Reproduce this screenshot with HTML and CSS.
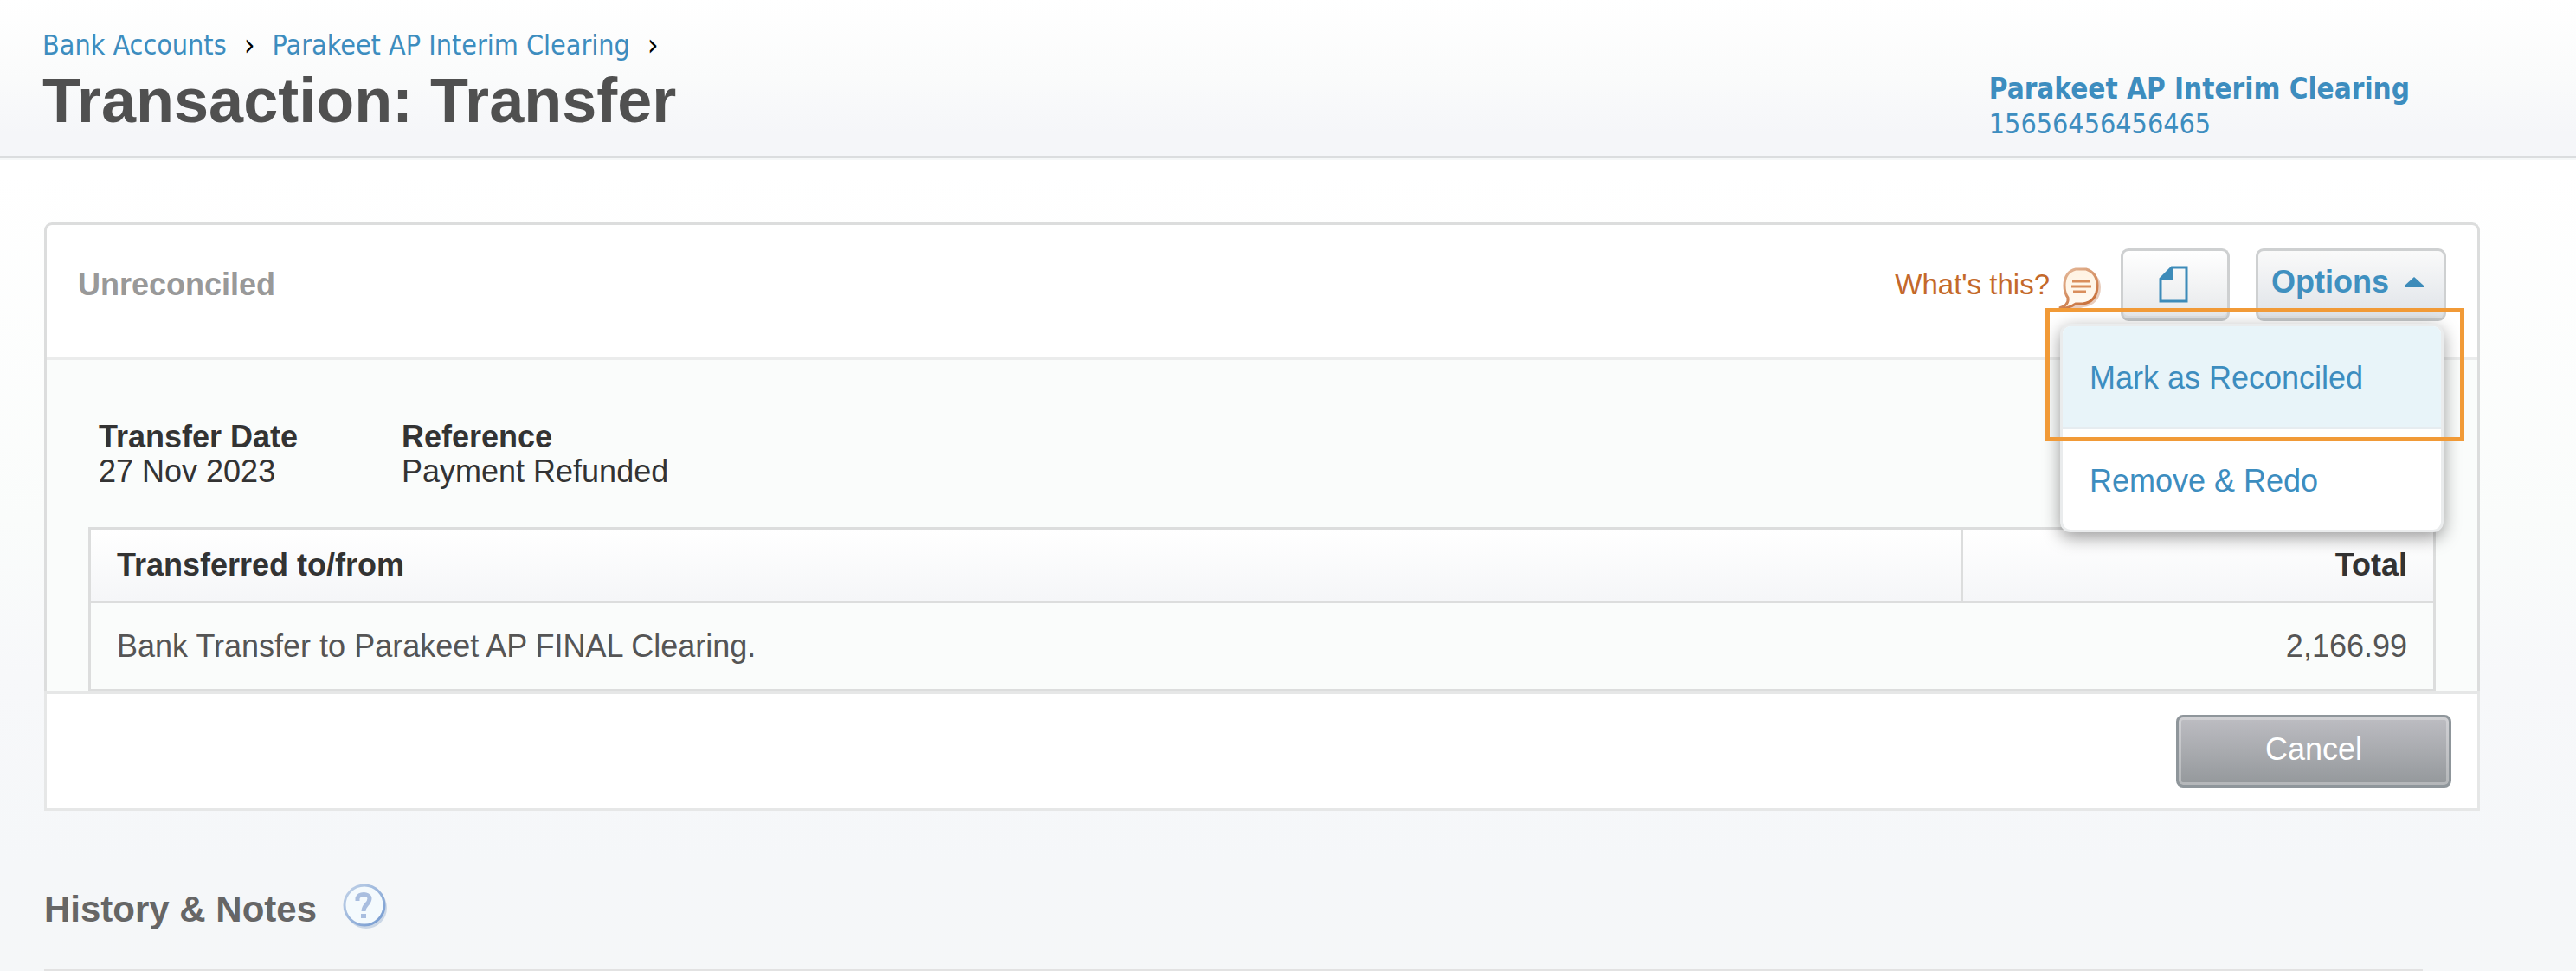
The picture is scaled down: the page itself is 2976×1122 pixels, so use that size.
FILE: index.html
```html
<!DOCTYPE html>
<html lang="en">
<head>
  <meta charset="UTF-8">
  <title>Transaction: Transfer</title>
  <link rel="stylesheet" href="styles.css">
</head>

<body>
<header class="page-header">
  <div class="heading">
    <nav class="breadcrumb">
      <a href="#">Bank Accounts</a>
      <span class="sep">›</span>
      <a href="#">Parakeet AP Interim Clearing</a>
      <span class="sep">›</span>
    </nav>
    <h1>Transaction: Transfer</h1>
  </div>
  <a class="account" href="#">
    <strong>Parakeet AP Interim Clearing</strong>
    <span>15656456456465</span>
  </a>
</header>

<main class="content">
  <section class="card">
    <div class="card-header">
      <h2 class="status">Unreconciled</h2>
      <div class="actions">
        <a class="whats-this" href="#">
          What's this?
          <svg class="icon-bubble" viewBox="0 0 50 56" width="50" height="56">
            <defs>
              <linearGradient id="bubble" x1="0" y1="0" x2="0" y2="1">
                <stop offset="0" stop-color="#fff3e2"/>
                <stop offset="1" stop-color="#fffaf3"/>
              </linearGradient>
              <linearGradient id="bubble-line" x1="0" y1="0" x2="0.6" y2="1">
                <stop offset="0" stop-color="#e6bda0"/>
                <stop offset="1" stop-color="#c8703a"/>
              </linearGradient>
            </defs>
            <path d="M28 5H33C43 7 49 14 49 24C49 37 41 46 29 47C20 50 10 52 3 50L12 42Z" fill="#e9cdbd"/>
            <path d="M20 3H32C41 6 45 12 45 22C45 35 38 42 28 43H20C14 47 9 49 1 48C8 46 12 42 11 36C8 32 7 28 7 22C7 11 12 5 20 3Z" fill="url(#bubble)" stroke="url(#bubble-line)" stroke-width="3"/>
            <path d="M16 17H36M15 23H38M17 29H32" stroke="#d98e5c" stroke-width="3"/>
          </svg>
        </a>
        <button class="btn btn-file" type="button" aria-label="Files">
          <svg viewBox="0 0 34 44" width="34" height="44">
            <path d="M15 2H32V41H2V15Z" fill="none" stroke="#3d8bb9" stroke-width="3"/>
            <path d="M16 1V16H1Z" fill="#3d8bb9"/>
          </svg>
        </button>
        <div class="dropdown">
          <button class="btn btn-options" type="button" aria-expanded="true">
            Options
            <svg viewBox="0 0 22 12" width="22" height="12"><path d="M11 0L22 10V12H0V10Z" fill="#3d8bb9"/></svg>
          </button>
          <ul class="menu">
            <li class="active"><a href="#">Mark as Reconciled</a></li>
            <li><a href="#">Remove &amp; Redo</a></li>
          </ul>
          <div class="highlight"></div>
        </div>
      </div>
    </div>

    <div class="card-body">
      <dl class="fields">
        <div class="field">
          <dt>Transfer Date</dt>
          <dd>27 Nov 2023</dd>
        </div>
        <div class="field">
          <dt>Reference</dt>
          <dd>Payment Refunded</dd>
        </div>
      </dl>
      <table class="lines">
        <thead>
          <tr>
            <th>Transferred to/from</th>
            <th class="total">Total</th>
          </tr>
        </thead>
        <tbody>
          <tr>
            <td>Bank Transfer to Parakeet AP FINAL Clearing.</td>
            <td class="total">2,166.99</td>
          </tr>
        </tbody>
      </table>
    </div>

    <div class="card-footer">
      <button class="btn-cancel" type="button">Cancel</button>
    </div>
  </section>

  <section class="history">
    <h2>History &amp; Notes</h2>
    <a class="help" href="#" aria-label="Help">
      <svg viewBox="0 0 52 52" width="52" height="52">
        <defs>
          <linearGradient id="ring" x1="0" y1="0" x2="1" y2="1">
            <stop offset="0" stop-color="#c3d3e8"/>
            <stop offset="1" stop-color="#7399d0"/>
          </linearGradient>
        </defs>
        <circle cx="27" cy="28" r="24" fill="#cbd7e6"/>
        <circle cx="25" cy="25" r="23" fill="#f4fafd" stroke="url(#ring)" stroke-width="3"/>
        <path d="M17 20V17C19 11 30 11 31 17C31 24 24 24 24 32" fill="none" stroke="#a9bedf" stroke-width="5"/>
        <rect x="21" y="35" width="6" height="5" fill="#a9bedf"/>
      </svg>
    </a>
  </section>
</main>
</body>
</html>
```

FILE: styles.css
```css
* {
  margin: 0;
  padding: 0;
  box-sizing: border-box;
}

body {
  min-height: 100vh;
  font-family: "Liberation Sans", Arial, sans-serif;
  font-size: 36px;
  line-height: 40px;
  color: #333;
  background: linear-gradient(#fff 200px, #fafcfb 600px, #f7f8fa 780px, #f5f7f9 1000px, #f5f7f8);
}

a {
  color: #3d8dbf;
  text-decoration: none;
}

/* page header */
.page-header {
  display: flex;
  justify-content: space-between;
  padding: 32px 192px 24px 49px;
  font-family: "DejaVu Sans Condensed", Tahoma, sans-serif;
  font-size: 32px;
  background: linear-gradient(#fff, #fafbfb 50%, #f5f6f9 85%, #f5f6f9);
  border-bottom: 3px solid #dbdddf;
  box-shadow: 0 2px #f5f7f8;
}

.breadcrumb {
  display: flex;
  gap: 20px;
}

.sep {
  font-size: 36px;
  color: #000;
}

h1 {
  margin-top: 4px;
  font-family: "Liberation Sans", Arial, sans-serif;
  font-size: 72px;
  line-height: 80px;
  color: #505050;
}

.account {
  display: flex;
  flex-direction: column;
  padding-top: 51px;
  margin-bottom: -8px;
}

.account strong {
  font-size: 33px;
}

/* card */
.content {
  padding: 74px 111px 0 51px;
}

.card {
  border: 3px solid #dcdddd;
  border-bottom: 0;
  border-radius: 9px 9px 0 0;
  background: #fff;
}

.card-header {
  display: flex;
  justify-content: space-between;
  align-items: center;
  padding: 27px 36px 42px;
}

.status {
  font-size: 36px;
  color: #999;
}

.actions {
  display: flex;
  align-items: center;
}

.whats-this {
  display: flex;
  align-items: center;
  gap: 10px;
  margin-right: 22px;
  font-size: 33px;
  color: #c4692a;
}

.icon-bubble {
  margin-top: 14px;
}

.btn {
  display: flex;
  align-items: center;
  justify-content: center;
  height: 84px;
  border: 3px solid #ced0d1;
  border-bottom-color: #c5c8ca;
  border-radius: 9px;
  font: bold 36px/40px "Liberation Sans", Arial, sans-serif;
  color: #3f90c0;
  background: linear-gradient(#fff, #e6e8ea);
  box-shadow: inset 0 -3px #dee1e3;
}

.btn-file {
  width: 126px;
  padding-right: 4px;
  margin-right: 30px;
}

.dropdown {
  position: relative;
}

.btn-options {
  width: 220px;
  gap: 18px;
  padding: 0 8px 6px 0;
  background: linear-gradient(#fafafa, #dfe3e8);
}

.menu {
  position: absolute;
  top: 87px;
  right: 3px;
  z-index: 1;
  width: 443px;
  overflow: hidden;
  list-style: none;
  background: #fff;
  border: 3px solid #eaeced;
  border-radius: 12px;
  box-shadow: 0 6px 20px rgba(0, 0, 0, 0.4);
}

.menu a {
  display: block;
  padding: 40px 31px 36px;
}

.menu .active {
  background: #e8f4f9;
  border-bottom: 3px solid #e6ecf0;
}

.highlight {
  position: absolute;
  top: 69px;
  right: -21px;
  z-index: 2;
  width: 484px;
  height: 154px;
  border: 5px solid #f19a37;
  pointer-events: none;
}

.card-body {
  padding: 69px 48px 0;
  background: #fafcfb;
  border-top: 3px solid #ebecec;
}

.fields {
  display: flex;
  padding-left: 12px;
  margin-bottom: 44px;
}

.field {
  min-width: 350px;
}

dt {
  font-weight: bold;
}

.lines {
  width: 100%;
  border: 3px solid #dcdddd;
  border-spacing: 0;
}

.lines th,
.lines td {
  padding: 21px 30px;
  text-align: left;
}

.lines th {
  background: linear-gradient(#fff, #f5f6f8);
  border-bottom: 3px solid #dcdddd;
}

.lines td {
  padding: 30px 30px 29px;
  color: #555;
}

.lines .total {
  width: 546px;
  text-align: right;
}

.lines th.total {
  border-left: 3px solid #dcdddd;
}

.card-footer {
  display: flex;
  justify-content: flex-end;
  margin: 0 -3px;
  padding: 24px 30px;
  background: #fff;
  border: 3px solid #e6e7e7;
}

.btn-cancel {
  width: 318px;
  height: 84px;
  padding-bottom: 5px;
  border: 3px solid #8f969b;
  border-radius: 8px;
  font: 36px/40px "Liberation Sans", Arial, sans-serif;
  color: #fff;
  background: linear-gradient(#bdbdc2, #94989b);
  box-shadow: inset 0 0 0 3px rgba(255, 255, 255, 0.3);
}

/* history */
.history {
  display: flex;
  align-items: flex-end;
  gap: 30px;
  margin: 84px 66px 0 0;
  padding-bottom: 47px;
  border-bottom: 2px solid #e2e2e2;
}

.history h2 {
  font-size: 42px;
  line-height: 44px;
  color: #666;
}

.help {
  height: 52px;
}

.help svg {
  display: block;
}
```
